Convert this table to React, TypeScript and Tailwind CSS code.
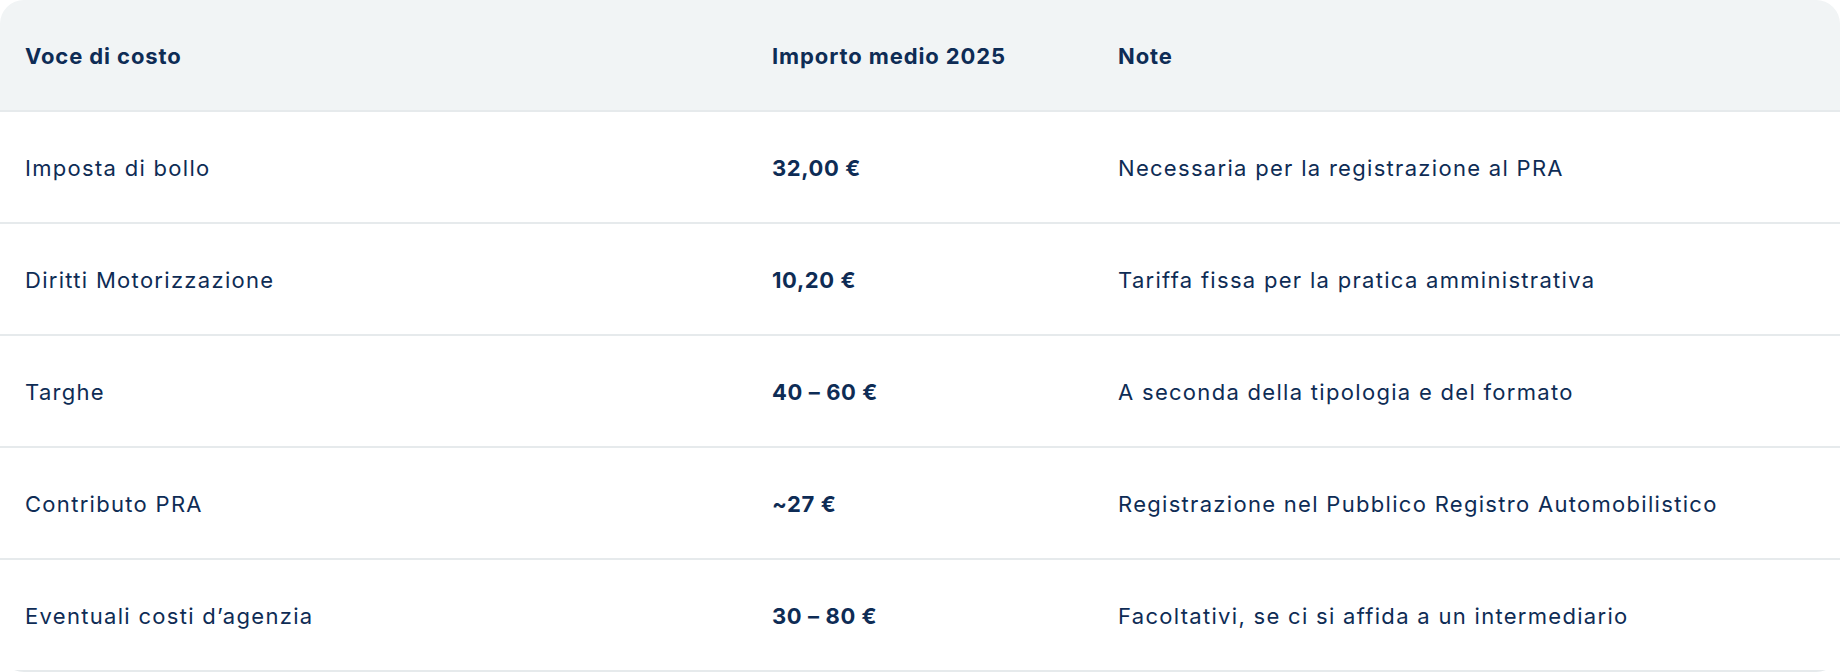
const rows = [
  { voce: "Imposta di bollo", importo: "32,00 €", note: "Necessaria per la registrazione al PRA" },
  { voce: "Diritti Motorizzazione", importo: "10,20 €", note: "Tariffa fissa per la pratica amministrativa" },
  { voce: "Targhe", importo: "40 – 60 €", note: "A seconda della tipologia e del formato" },
  { voce: "Contributo PRA", importo: "~27 €", note: "Registrazione nel Pubblico Registro Automobilistico" },
  { voce: "Eventuali costi d’agenzia", importo: "30 – 80 €", note: "Facoltativi, se ci si affida a un intermediario" },
];

export default function App() {
  return (
    <main className="min-h-screen bg-white font-['Inter',sans-serif] text-[#0e2c55]">
      <div className="overflow-hidden rounded-3xl">
        {/* Header */}
        <div className="grid h-[112px] grid-cols-[772px_346px_1fr] items-center border-b-2 border-[#e6eaec] bg-[#f1f4f5] pt-[2px] text-[22px] font-bold tracking-[0.9px]">
          <div className="pl-[25px]">Voce di costo</div>
          <div>Importo medio 2025</div>
          <div>Note</div>
        </div>

        {/* Rows */}
        {rows.map((r) => (
          <div
            key={r.voce}
            className="grid h-[112px] grid-cols-[772px_346px_1fr] items-center border-b-2 border-[#e6eaec] pt-[2px] text-[22px] tracking-[1.3px]"
          >
            <div className="pl-[25px]">{r.voce}</div>
            <div className="font-bold tracking-[0.6px]">{r.importo}</div>
            <div>{r.note}</div>
          </div>
        ))}
      </div>
    </main>
  );
}
